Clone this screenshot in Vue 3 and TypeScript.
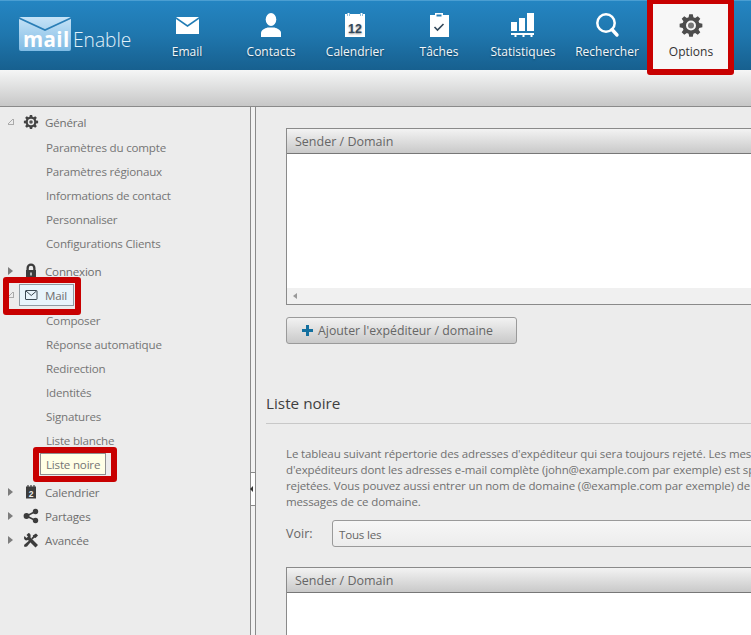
<template>
  <div class="page">
    <header class="topbar">
      <div class="logo">
        <svg class="logo-env" width="54" height="36" viewBox="0 0 54 36">
          <defs>
            <linearGradient id="envFill" x1="0" y1="0" x2="0" y2="1">
              <stop offset="0" stop-color="#c6e3f7" />
              <stop offset="1" stop-color="#7fbbe4" />
            </linearGradient>
          </defs>
          <rect x="0" y="0" width="52" height="34" rx="2" fill="url(#envFill)" />
          <path d="M0 1 L26 13 L52 1" fill="none" stroke="#2a7eb6" stroke-width="1.6" />
        </svg>
        <span class="logo-mail">mail</span>
        <span class="logo-enable">Enable</span>
      </div>
      <nav class="nav">
        <div v-for="item in navItems" :key="item.label" class="nav-item" :class="{ active: item.active }">
          <svg class="nav-icon" width="30" height="30" viewBox="0 0 30 30" v-html="item.icon"></svg>
          <span>{{ item.label }}</span>
        </div>
      </nav>
    </header>
    <div class="toolbar"></div>

    <div class="main">
      <aside class="sidebar">
        <div v-for="group in groups" :key="group.label" class="group">
          <div class="group-row">
            <span class="arrow" :class="group.open ? 'open' : 'closed'"></span>
            <span class="group-head" :class="{ selected: group.selected }">
              <svg class="tree-icon" width="16" height="16" viewBox="0 0 16 16" v-html="group.icon"></svg>
              <span>{{ group.label }}</span>
            </span>
          </div>
          <ul v-if="group.children.length" class="children">
            <li v-for="child in group.children" :key="child">
              <span :class="{ tip: child === 'Liste noire' }">{{ child }}</span>
            </li>
          </ul>
        </div>
      </aside>

      <div class="splitter"><span class="handle"></span></div>

      <section class="content">
        <div class="inner">
          <div class="grid first">
            <div class="grid-head">Sender / Domain</div>
            <div class="grid-body"></div>
            <div class="grid-scroll"><span class="scroll-left"></span></div>
          </div>
          <button class="add-btn" type="button">
            <svg width="13" height="13" viewBox="0 0 13 13">
              <path d="M5 1h3v4h4v3H8v4H5V8H1V5h4z" fill="#14709f" />
            </svg>
            <span>Ajouter l'expéditeur / domaine</span>
          </button>

          <h2 class="section-title">Liste noire</h2>
          <p class="desc">
            <span v-for="line in descLines" :key="line">{{ line }}</span>
          </p>
          <div class="filter">
            <label>Voir:</label>
            <div class="select">Tous les</div>
          </div>
          <div class="grid second">
            <div class="grid-head">Sender / Domain</div>
            <div class="grid-body"></div>
          </div>
        </div>
      </section>
    </div>

    <!-- annotations rouges -->
    <div class="mark mark-options"></div>
    <div class="mark mark-mail"></div>
    <div class="mark mark-liste"></div>
  </div>
</template>

<script setup lang="ts">
interface NavItem {
  label: string
  icon: string
  active?: boolean
}

interface Group {
  label: string
  icon: string
  open?: boolean
  selected?: boolean
  children: string[]
}

// roue dentée : dents + trou central
const gearPath = (cx: number, cy: number, outer: number, inner: number, hole: number, teeth = 8): string => {
  let d = ''
  const step = (Math.PI * 2) / teeth
  for (let i = 0; i < teeth; i++) {
    const a = i * step - Math.PI / 2
    const pts: [number, number][] = [
      [inner, a - step * 0.36],
      [outer, a - step * 0.2],
      [outer, a + step * 0.2],
      [inner, a + step * 0.36]
    ]
    for (const [r, t] of pts) {
      d += `${d ? 'L' : 'M'}${(cx + r * Math.cos(t)).toFixed(2)} ${(cy + r * Math.sin(t)).toFixed(2)}`
    }
  }
  d += `Z M${cx - hole} ${cy}a${hole} ${hole} 0 1 0 ${hole * 2} 0a${hole} ${hole} 0 1 0 ${-hole * 2} 0Z`
  return d
}

const navItems: NavItem[] = [
  {
    label: 'Email',
    icon: '<path d="M4 5h23L15.500 13z" fill="#fff"/><path d="M4 7l11.500 8L27 7v15H4z" fill="#fff"/>'
  },
  {
    label: 'Contacts',
    icon: '<ellipse cx="15" cy="7.500" rx="5.300" ry="6.500" fill="#fff"/><path d="M5 25v-4c0-3 3.500-4.500 6.500-5.500h7c3 1 6.500 2.500 6.500 5.500v4z" fill="#fff"/>'
  },
  {
    label: 'Calendrier',
    icon: '<path d="M5 2h2v2h3V2h10v2h3V2h2v23H5z" fill="#fff"/><rect x="7.500" y="1" width="2" height="3" fill="#fff"/><rect x="20.500" y="1" width="2" height="3" fill="#fff"/><text x="15" y="20.500" text-anchor="middle" font-family="Liberation Sans, sans-serif" font-weight="700" font-size="12.500" fill="#33485a">12</text>'
  },
  {
    label: 'Tâches',
    icon: '<path d="M6 3h5V1h8v2h6v22H6z" fill="#fff"/><rect x="12.500" y="2.500" width="5" height="2" fill="#2a7eb6"/><path d="M10.500 15l3 3 6-6" fill="none" stroke="#33485a" stroke-width="1.600"/>'
  },
  {
    label: 'Statistiques',
    icon: '<rect x="3" y="10" width="6" height="9" fill="#fff"/><rect x="11" y="6" width="6" height="13" fill="#fff"/><rect x="19" y="1" width="7" height="18" fill="#fff"/><path d="M3 21h23v2h-1.500v2h-2v-2h-6v2h-2v-2h-6v2h-2v-2H3z" fill="#fff"/>'
  },
  {
    label: 'Rechercher',
    icon: '<circle cx="14" cy="11" r="8.700" fill="none" stroke="#fff" stroke-width="2.500"/><path d="M20 17.500L25 23" stroke="#fff" stroke-width="3.400" stroke-linecap="round"/>'
  },
  {
    label: 'Options',
    active: true,
    icon: `<path fill-rule="evenodd" fill="#4d4d4d" d="${gearPath(15, 13.5, 11.5, 8.6, 5)}"/><circle cx="15" cy="13.500" r="3" fill="#777"/>`
  }
]

const groups: Group[] = [
  {
    label: 'Général',
    open: true,
    icon: `<path fill-rule="evenodd" fill="#444" d="${gearPath(8, 8, 7.2, 5.4, 3.2)}"/><circle cx="8" cy="8" r="1.800" fill="#555"/>`,
    children: ['Paramètres du compte', 'Paramètres régionaux', 'Informations de contact', 'Personnaliser', 'Configurations Clients']
  },
  {
    label: 'Connexion',
    icon: '<path d="M3.500 7V5a4.500 4.500 0 0 1 9 0v2h.5v7.500H3V7zM5.800 7h4.400V5a2.200 2.200 0 0 0-4.400 0z" fill-rule="evenodd" fill="#3c3c3c"/><rect x="7.300" y="9.500" width="1.400" height="3" fill="#ececec"/>',
    children: []
  },
  {
    label: 'Mail',
    open: true,
    selected: true,
    icon: '<rect x="1.500" y="3.500" width="11.500" height="9" rx="0.500" fill="none" stroke="#3c4a54"/><path d="M2 4l5.250 4.500L12.500 4" fill="none" stroke="#3c4a54"/>',
    children: ['Composer', 'Réponse automatique', 'Redirection', 'Identités', 'Signatures', 'Liste blanche', 'Liste noire']
  },
  {
    label: 'Calendrier',
    icon: '<path d="M3 2.500h10v12H3z" fill="#3c3c3c"/><path d="M5 1v3M8 1v3M11 1v3" stroke="#3c3c3c" stroke-width="1.200"/><text x="8" y="13" text-anchor="middle" font-family="Liberation Sans, sans-serif" font-weight="700" font-size="8.500" fill="#eee">2</text>',
    children: []
  },
  {
    label: 'Partages',
    icon: '<path d="M12.500 3.500L3.500 8l9 4.500" fill="none" stroke="#3c3c3c" stroke-width="1.500"/><circle cx="12.500" cy="3.500" r="2.700" fill="#3c3c3c"/><circle cx="3.500" cy="8" r="2.900" fill="#3c3c3c"/><circle cx="12.500" cy="12.500" r="2.700" fill="#3c3c3c"/>',
    children: []
  },
  {
    label: 'Avancée',
    // clé plate + tournevis croisés
    icon: '<path d="M5.500 1L3.500 3l1.500 1.500L3.500 6 1.500 4C.5 6 1 8 3 8.500l2-.5 7.500 7.500 2.500-2.500L7.500 5.500C8 3 7.500 1.500 5.500 1z" fill="#3c3c3c"/><path d="M13 1.500l2 2-2.500 2.500-1.200-.2L9.500 7.500 8.200 6.200 10 4.500l-.2-1z" fill="#3c3c3c"/><path d="M6.700 8l1.500 1.500L4 14.500 1.500 15 1 13z" fill="#3c3c3c"/>',
    children: []
  }
]

const descLines = [
  "Le tableau suivant répertorie des adresses d'expéditeur qui sera toujours rejeté. Les messages",
  "d'expéditeurs dont les adresses e-mail complète (john@example.com par exemple) est spécifié",
  'rejetées. Vous pouvez aussi entrer un nom de domaine (@example.com par exemple) de',
  'messages de ce domaine.'
]
</script>

<style>
html,
body {
  margin: 0;
  background: #ececec;
}
</style>

<style scoped>
.page {
  position: relative;
  width: 751px;
  height: 635px;
  overflow: hidden;
  background: #ececec;
  font-family: "Open Sans", "Noto Sans", sans-serif;
  font-size: 11.6px;
  letter-spacing: -0.2px;
  color: #6a6a6a;
}

.topbar {
  display: flex;
  height: 70px;
  box-sizing: border-box;
  border-top: 1px solid #4a9ed2;
  background: linear-gradient(#2485c2, #1f76ad 50%, #17608f);
}

.logo {
  position: relative;
  width: 145px;
  flex: none;
  letter-spacing: 0;
}

.logo-env {
  position: absolute;
  left: 19px;
  top: 16px;
}

.logo-mail {
  position: absolute;
  left: 23px;
  top: 25px;
  font-size: 20.5px;
  font-weight: 700;
  letter-spacing: 0.4px;
  color: #fff;
  line-height: 27px;
}

.logo-enable {
  position: absolute;
  left: 73px;
  top: 25px;
  font-size: 19.2px;
  font-weight: 300;
  color: #e2f1fa;
  line-height: 28px;
}

.nav {
  display: flex;
}

.nav-item {
  width: 84px;
  display: flex;
  flex-direction: column;
  align-items: center;
  padding-top: 11px;
  box-sizing: border-box;
  font-size: 12px;
  letter-spacing: 0;
  color: #f2f7fa;
  text-shadow: 0 1px 2px rgba(0, 0, 0, 0.45);
  line-height: 16px;
}

.nav-icon {
  margin-bottom: 2px;
}

.nav-item.active {
  color: #333;
  text-shadow: none;
  background: #f7f7f7;
}

.toolbar {
  height: 37px;
  box-sizing: border-box;
  border-bottom: 1px solid #8a8a8a;
  background: linear-gradient(#f5f6f6, #c7c7c7);
}

.main {
  display: flex;
  height: 528px;
}

.sidebar {
  width: 250px;
  flex: none;
  box-sizing: border-box;
  padding-top: 3px;
}

.group-row {
  display: flex;
  align-items: center;
  height: 24px;
  padding-left: 8px;
}

.arrow {
  width: 0;
  height: 0;
  flex: none;
  margin-right: 11px;
}

.arrow.closed {
  border-left: 5px solid #7d7d7d;
  border-top: 4px solid transparent;
  border-bottom: 4px solid transparent;
}

.arrow.open {
  width: 6px;
  height: 6px;
  box-sizing: border-box;
  margin-right: 10px;
  border-right: 1px solid #aaa;
  border-bottom: 1px solid #aaa;
  background: linear-gradient(135deg, transparent 48%, #aaa 48%, #aaa 60%, transparent 60%);
}

.group-head {
  display: flex;
  align-items: center;
  height: 22px;
  box-sizing: border-box;
  margin-left: -1px;
  color: #6e6e6e;
}

.tree-icon {
  margin-right: 6px;
  flex: none;
}

.group-head.selected {
  margin-left: -5px;
  padding: 0 6px 0 4px;
  border: 1px solid #8f9ba3;
  background: #e8f4fb;
}

.group-head.selected .tree-icon {
  margin-right: 5px;
}

.children {
  list-style: none;
  margin: 2px 0 3px;
  padding: 0 0 0 46px;
}

.children li {
  height: 24px;
  line-height: 24px;
  color: #757575;
}

.tip {
  display: inline-block;
  height: 22px;
  line-height: 21px;
  box-sizing: border-box;
  margin: 0 0 0 -6px;
  padding: 0 5px;
  border: 1px solid #8f8f8f;
  background: #ffffe6;
}

.splitter {
  position: relative;
  width: 6px;
  flex: none;
  box-sizing: border-box;
  border-left: 1px solid #8a8a8a;
  border-right: 1px solid #8a8a8a;
  background: #f2f2f2;
}

.handle {
  position: absolute;
  left: 0;
  top: 365px;
  width: 4px;
  height: 34px;
  box-sizing: border-box;
  background: #fff;
  border-top: 1px solid #8a8a8a;
  border-bottom: 1px solid #8a8a8a;
}

.handle::before {
  content: "";
  position: absolute;
  left: -1px;
  top: 13px;
  border-right: 3px solid #333;
  border-top: 3px solid transparent;
  border-bottom: 3px solid transparent;
}

.content {
  flex: 1;
  min-width: 0;
  overflow: hidden;
}

.inner {
  width: 640px;
  padding: 21px 0 0 10px;
}

.grid {
  margin-left: 20px;
  border: 1px solid #8a8a8a;
  background: #fff;
}

.grid-head {
  height: 25px;
  line-height: 25px;
  box-sizing: border-box;
  padding-left: 8px;
  font-size: 12.5px;
  letter-spacing: 0;
  color: #666;
  border-bottom: 1px solid #777;
  background: linear-gradient(#f3f3f3, #c9c9c9);
}

.first .grid-body {
  height: 134px;
}

.grid-scroll {
  height: 16px;
  display: flex;
  align-items: center;
  padding-left: 6px;
  background: #f0f0f0;
}

.scroll-left {
  border-right: 4px solid #999;
  border-top: 3px solid transparent;
  border-bottom: 3px solid transparent;
}

.add-btn {
  display: flex;
  align-items: center;
  gap: 4px;
  width: 231px;
  height: 27px;
  margin: 12px 0 0 20px;
  padding: 0 0 0 14px;
  box-sizing: border-box;
  border: 1px solid #9a9a9a;
  border-radius: 3px;
  background: linear-gradient(#f2f2f2, #c9c9c9);
  font-family: inherit;
  font-size: 12.3px;
  letter-spacing: 0;
  color: #666;
}

.section-title {
  margin: 49px 0 0;
  padding-bottom: 10px;
  border-bottom: 1px solid #c8c8c8;
  font-size: 15.3px;
  font-weight: 400;
  letter-spacing: 0;
  line-height: 20px;
  color: #3f3f3f;
}

.desc {
  margin: 22px 0 0 20px;
  font-size: 11.5px;
  letter-spacing: -0.12px;
  line-height: 16px;
  color: #707070;
}

.desc span {
  display: block;
  white-space: nowrap;
}

.filter {
  display: flex;
  align-items: center;
  margin: 10px 0 0 20px;
}

.filter label {
  width: 46px;
  flex: none;
  font-size: 12.5px;
  letter-spacing: 0;
  color: #666;
}

.select {
  flex: 1;
  height: 27px;
  line-height: 27px;
  box-sizing: border-box;
  padding-left: 6px;
  border: 1px solid #9a9a9a;
  border-radius: 3px;
  background: linear-gradient(#f7f7f7, #ececec);
  color: #666;
}

.second {
  margin-top: 20px;
}

.second .grid-body {
  height: 60px;
}

.mark {
  position: absolute;
  box-sizing: border-box;
  border: 6px solid #c80000;
  border-radius: 3px;
  pointer-events: none;
}

.mark-options {
  left: 647px;
  top: -2px;
  width: 87px;
  height: 77px;
}

.mark-mail {
  left: 3px;
  top: 277px;
  width: 78px;
  height: 38px;
}

.mark-liste {
  left: 33px;
  top: 447px;
  width: 84px;
  height: 35px;
}
</style>
